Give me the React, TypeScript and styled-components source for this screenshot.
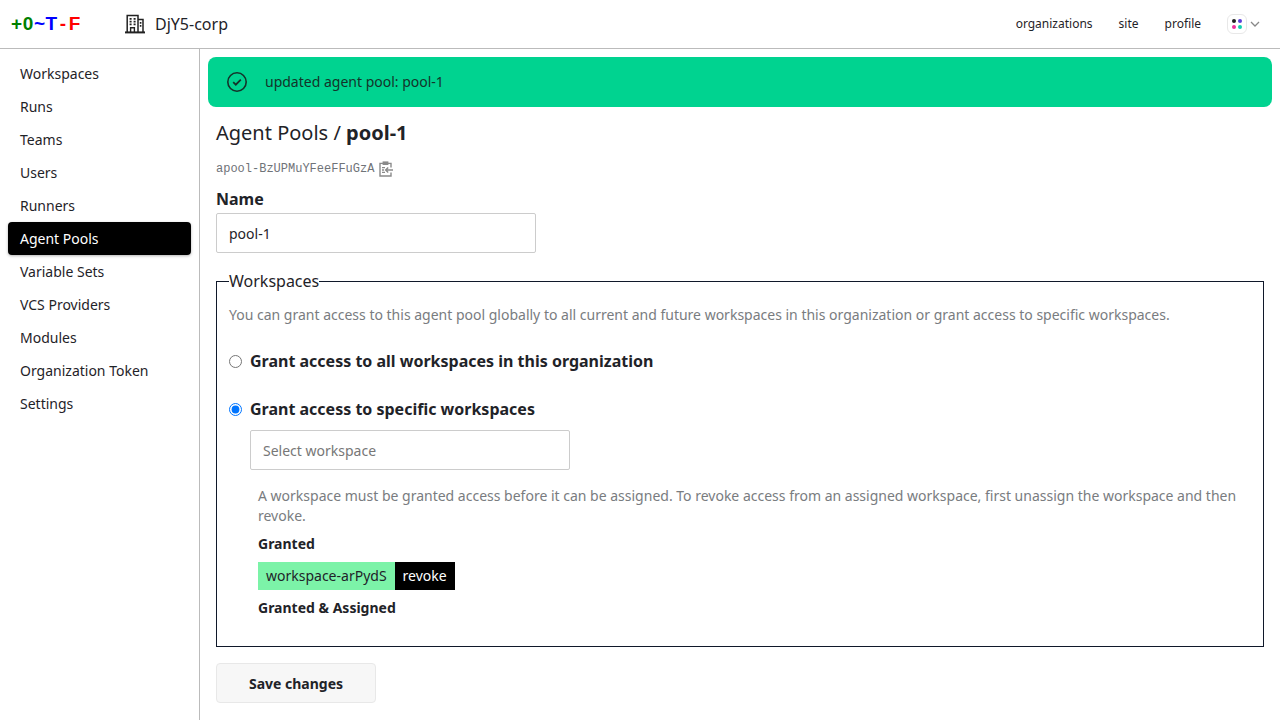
import styled, { createGlobalStyle } from 'styled-components'

const NAV_ITEMS = [
  'Workspaces',
  'Runs',
  'Teams',
  'Users',
  'Runners',
  'Agent Pools',
  'Variable Sets',
  'VCS Providers',
  'Modules',
  'Organization Token',
  'Settings',
]

function BuildingIcon() {
  return (
    <svg width="20" height="20" viewBox="0 0 20 20" fill="none" stroke="#222">
      <path d="M0 18.4h20" strokeWidth="2" />
      <path d="M2.2 18V1.6h10.8V18M13 5.6h5V18" strokeWidth="1.5" />
      <path d="M5.6 18v-4.2h3.8V18" strokeWidth="1.4" />
      <path d="M4.6 4.8h2M8.6 4.8h2M4.6 7.6h2M8.6 7.6h2M4.6 10.4h2M8.6 10.4h2M14.8 8.8h1.6M14.8 11.8h1.6" strokeWidth="1.7" />
    </svg>
  )
}

function CheckCircleIcon() {
  return (
    <svg width="22" height="22" viewBox="0 0 22 22" fill="none" stroke="#14332a" strokeWidth="1.6">
      <circle cx="11" cy="11" r="9.2" />
      <path d="M7.2 11.2l2.6 2.5 5-5" strokeWidth="1.8" />
    </svg>
  )
}

function ClipboardIcon() {
  return (
    <svg width="14" height="16" viewBox="0 0 14 16" fill="none" stroke="#8a8a8a" strokeWidth="1.4">
      <path d="M4 2.4H1V15h11v-3.4M12 6.4V2.4H9" />
      <rect x="3.6" y="0.4" width="5.8" height="3.6" fill="#8a8a8a" stroke="none" />
      <path d="M3 6.6h3M3 9h2M3 11.4h3" />
      <path d="M14 9H6.6M9.2 6.4L6.6 9l2.6 2.6" />
    </svg>
  )
}

function PaletteIcon() {
  return (
    <svg width="12" height="12" viewBox="0 0 12 12">
      <circle cx="3" cy="3" r="2" fill="#222" />
      <circle cx="9" cy="3" r="2" fill="#5b3fd9" />
      <circle cx="3" cy="9" r="2" fill="#ec2f9c" />
      <circle cx="9" cy="9" r="2" fill="#14cfb0" />
    </svg>
  )
}

function ChevronIcon() {
  return (
    <svg width="10" height="6" viewBox="0 0 10 6" fill="none" stroke="#888" strokeWidth="1.3">
      <path d="M1 1l4 4 4-4" />
    </svg>
  )
}

export default function App() {
  return (
    <Shell>
      <GlobalStyle />
      <TopBar>
        <Logo>
          <LogoPart $color="#008000">+0</LogoPart>
          <LogoPart $color="#0000ff">~T</LogoPart>
          <LogoPart $color="#ff0000" $spaced>-</LogoPart>
          <LogoPart $color="#ff0000" $spaced>F</LogoPart>
        </Logo>
        <OrgName>
          <BuildingIcon />
          DjY5-corp
        </OrgName>
        <TopLinks>
          <TopLink>organizations</TopLink>
          <TopLink>site</TopLink>
          <TopLink>profile</TopLink>
          <ThemePicker>
            <ThemeSwatch>
              <PaletteIcon />
            </ThemeSwatch>
            <ChevronIcon />
          </ThemePicker>
        </TopLinks>
      </TopBar>
      <Body>
        <Sidebar>
          {NAV_ITEMS.map(item => (
            <NavItem key={item} $active={item === 'Agent Pools'}>
              {item}
            </NavItem>
          ))}
        </Sidebar>
        <Main>
          <Flash>
            <CheckCircleIcon />
            <span>updated agent pool: pool-1</span>
          </Flash>
          <Content>
            <Title>
              Agent Pools / <strong>pool-1</strong>
            </Title>
            <ResourceId>
              apool-BzUPMuYFeeFFuGzA
              <ClipboardIcon />
            </ResourceId>
            <FieldLabel htmlFor="name">Name</FieldLabel>
            <TextInput id="name" defaultValue="pool-1" />
            <Fieldset>
              <Legend>Workspaces</Legend>
              <Hint>
                You can grant access to this agent pool globally to all current and future workspaces in this
                organization or grant access to specific workspaces.
              </Hint>
              <RadioRow>
                <Radio type="radio" name="scope" />
                Grant access to all workspaces in this organization
              </RadioRow>
              <RadioRow>
                <Radio type="radio" name="scope" defaultChecked />
                Grant access to specific workspaces
              </RadioRow>
              <SelectInput placeholder="Select workspace" />
              <Details>
                <Hint>
                  A workspace must be granted access before it can be assigned. To revoke access from an assigned
                  workspace, first unassign the workspace and then revoke.
                </Hint>
                <SubHeading>Granted</SubHeading>
                <TagRow>
                  <Tag>workspace-arPydS</Tag>
                  <RevokeButton>revoke</RevokeButton>
                </TagRow>
                <SubHeading>Granted &amp; Assigned</SubHeading>
              </Details>
            </Fieldset>
            <SaveButton>Save changes</SaveButton>
          </Content>
        </Main>
      </Body>
    </Shell>
  )
}

const GlobalStyle = createGlobalStyle`
  html, body {
    margin: 0;
    height: 100%;
    overflow: hidden;
    background: #fff;
  }
  body {
    font-family: 'Noto Sans', sans-serif;
    font-size: 14px;
    line-height: 20px;
    color: #1f2328;
  }
  * { box-sizing: border-box; }
`

const Shell = styled.div`
  display: flex;
  flex-direction: column;
  height: 720px;
`

const TopBar = styled.header`
  display: flex;
  align-items: center;
  height: 49px;
  flex-shrink: 0;
  padding: 0 20px 0 11px;
  border-bottom: 1px solid #bbb;
`

const Logo = styled.div`
  display: flex;
  width: 114px;
  font-family: 'Liberation Sans', sans-serif;
  font-size: 19px;
  font-weight: 700;
  letter-spacing: 0.6px;
`

const LogoPart = styled.span<{ $color: string; $spaced?: boolean }>`
  color: ${p => p.$color};
  margin-left: ${p => (p.$spaced ? '2px' : '0')};
`

const OrgName = styled.div`
  display: flex;
  align-items: center;
  gap: 10px;
  font-size: 16px;
`

const TopLinks = styled.nav`
  display: flex;
  align-items: center;
  gap: 26px;
  margin-left: auto;
`

const TopLink = styled.a`
  font-size: 12px;
  color: #1f2328;
`

const ThemePicker = styled.div`
  display: flex;
  align-items: center;
  gap: 3px;
`

const ThemeSwatch = styled.div`
  display: flex;
  align-items: center;
  justify-content: center;
  width: 20px;
  height: 20px;
  border: 1px solid #e8e8e8;
  border-radius: 6px;
`

const Body = styled.div`
  display: flex;
  flex: 1;
  min-height: 0;
`

const Sidebar = styled.aside`
  display: flex;
  flex-direction: column;
  width: 200px;
  flex-shrink: 0;
  padding: 8px 8px 0;
  border-right: 1px solid #bbb;
`

const NavItem = styled.a<{ $active?: boolean }>`
  display: flex;
  align-items: center;
  height: 33px;
  padding: 0 12px;
  border-radius: 4px;
  color: ${p => (p.$active ? '#fff' : '#1f2328')};
  background: ${p => (p.$active ? '#000' : 'transparent')};
  box-shadow: ${p => (p.$active ? '0 1px 3px rgba(0,0,0,0.3)' : 'none')};
`

const Main = styled.main`
  flex: 1;
  min-width: 0;
  padding: 8px 8px 0;
`

const Flash = styled.div`
  display: flex;
  align-items: center;
  gap: 17px;
  height: 50px;
  padding: 0 18px;
  border-radius: 8px;
  background: #00d390;
  color: #14332a;
`

const Content = styled.div`
  display: flex;
  flex-direction: column;
  align-items: flex-start;
  padding: 12px 8px 0;
`

const Title = styled.h1`
  margin: 0;
  font-size: 20px;
  line-height: 28px;
  font-weight: 400;

  strong {
    font-weight: 700;
  }
`

const ResourceId = styled.div`
  display: flex;
  align-items: center;
  gap: 5px;
  height: 20px;
  margin-top: 12px;
  font-family: 'Liberation Mono', monospace;
  font-size: 12px;
  color: #6f7378;
`

const FieldLabel = styled.label`
  margin-top: 8px;
  font-size: 16px;
  line-height: 24px;
  font-weight: 700;
`

const TextInput = styled.input`
  width: 320px;
  height: 40px;
  margin-top: 2px;
  padding: 0 12px;
  border: 1px solid #ccc;
  border-radius: 2px;
  font: inherit;
  color: #1f2328;
  outline: none;
`

const Fieldset = styled.fieldset`
  align-self: stretch;
  margin: 18px 0 0;
  padding: 14px 12px 28px;
  border: 1px solid #10182a;
  min-width: 0;
`

const Legend = styled.legend`
  padding: 0;
  font-size: 16px;
  line-height: 20px;
`

const Hint = styled.p`
  margin: 0;
  color: #797c80;
`

const RadioRow = styled.label`
  display: flex;
  align-items: center;
  gap: 8px;
  margin-top: 22px;
  height: 26px;
  font-size: 16px;
  font-weight: 700;

  &:first-of-type {
    margin-top: 23px;
  }
`

const Radio = styled.input`
  width: 13px;
  height: 13px;
  margin: 0;
`

const SelectInput = styled(TextInput)`
  display: block;
  margin: 8px 0 0 21px;

  &::placeholder {
    color: #777;
  }
`

const Details = styled.div`
  display: flex;
  flex-direction: column;
  align-items: flex-start;
  padding: 16px 0 0 29px;
`

const SubHeading = styled.div`
  margin-top: 8px;
  font-weight: 700;
`

const TagRow = styled.div`
  display: flex;
  margin: 8px 0 0;
  height: 28px;
`

const Tag = styled.span`
  display: flex;
  align-items: center;
  padding: 0 8px;
  background: #7cf3a8;
`

const RevokeButton = styled.button`
  padding: 0 8px;
  border: none;
  background: #000;
  color: #fff;
  font: inherit;
`

const SaveButton = styled.button`
  width: 160px;
  height: 40px;
  margin-top: 16px;
  padding: 2px 0 0;
  border: 1px solid #e8e8e8;
  border-radius: 4px;
  background: #f7f7f7;
  color: #1f2328;
  font: inherit;
  font-weight: 700;
`
